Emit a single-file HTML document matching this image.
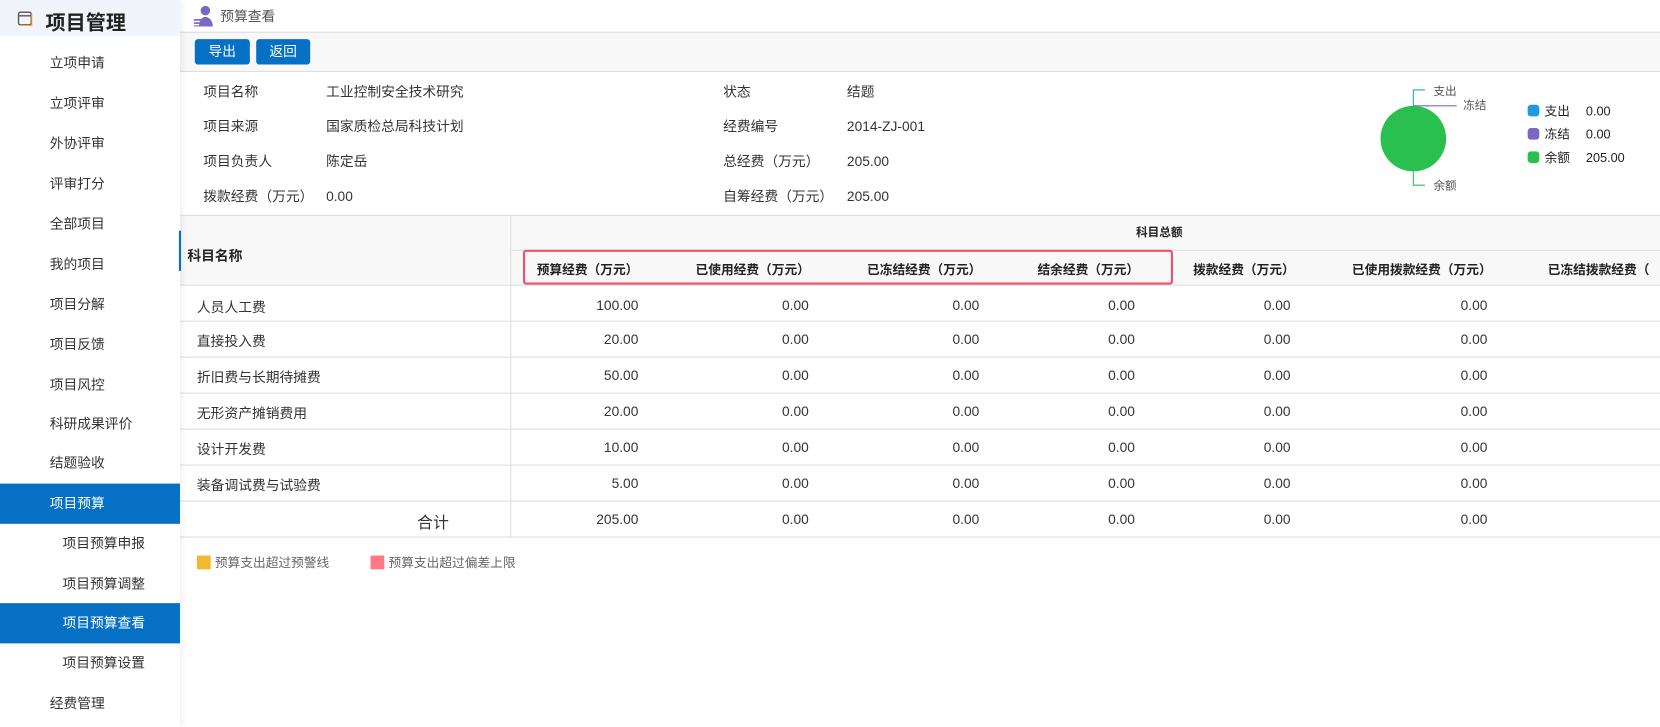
<!DOCTYPE html>
<html><head><meta charset="utf-8"><style>
html,body{margin:0;padding:0;width:1660px;height:727px;overflow:hidden;background:#fff}
#r{position:absolute;left:0;top:0;width:1568px;height:687px;transform:scale(1.05867,1.0582);transform-origin:0 0;font-family:"Liberation Sans","Noto Sans CJK SC",sans-serif;font-size:13px;color:#333}
.a{position:absolute;white-space:nowrap}
.n{margin-top:2px}
.c{margin-top:-1px}
#sb{position:absolute;left:0;top:0;width:170px;height:687px;background:#fff;box-shadow:2px 0 6px rgba(0,0,0,.08);z-index:2}
.it{position:absolute;left:0;width:170px;height:38px;line-height:38px;font-size:13px;color:#333}
.it.on{background:#0670c4;color:#fff}
.hd{position:absolute;font-weight:bold;font-size:12px;color:#222;text-align:center;white-space:nowrap}
.v{position:absolute;text-align:right;white-space:nowrap;font-size:13px;color:#333;margin-top:2px}
.hl{position:absolute;left:170px;width:1398px;height:1px;background:#ddd}
</style></head><body><div id="r">
<div id="sb">
 <div class="a" style="left:0;top:0;width:170px;height:34px;background:#f2f4fc"></div>
 <svg class="a" style="left:16px;top:10px" width="16" height="15" viewBox="0 0 16 15"><rect x="1.5" y="1.5" width="12" height="12" rx="2" fill="none" stroke="#555" stroke-width="1.3"/><path d="M2 5h11" stroke="#555" stroke-width="1.3"/><path d="M3 14h11V3" stroke="#f0a030" stroke-width="1" fill="none"/></svg>
 <div class="a" style="left:43px;top:7px;font-size:19px;font-weight:bold;color:#222">项目管理</div>
 <div class="it" style="top:41px"><span style="padding-left:47px">立项申请</span></div>
 <div class="it" style="top:79px"><span style="padding-left:47px">立项评审</span></div>
 <div class="it" style="top:117px"><span style="padding-left:47px">外协评审</span></div>
 <div class="it" style="top:155px"><span style="padding-left:47px">评审打分</span></div>
 <div class="it" style="top:193px"><span style="padding-left:47px">全部项目</span></div>
 <div class="it" style="top:231px"><span style="padding-left:47px">我的项目</span></div>
 <div class="it" style="top:269px"><span style="padding-left:47px">项目分解</span></div>
 <div class="it" style="top:307px"><span style="padding-left:47px">项目反馈</span></div>
 <div class="it" style="top:345px"><span style="padding-left:47px">项目风控</span></div>
 <div class="it" style="top:382px"><span style="padding-left:47px">科研成果评价</span></div>
 <div class="it" style="top:419px"><span style="padding-left:47px">结题验收</span></div>
 <div class="it on" style="top:457px"><span style="padding-left:47px">项目预算</span></div>
 <div class="it" style="top:495px"><span style="padding-left:59px">项目预算申报</span></div>
 <div class="it" style="top:533px"><span style="padding-left:59px">项目预算调整</span></div>
 <div class="it on" style="top:570px"><span style="padding-left:59px">项目预算查看</span></div>
 <div class="it" style="top:608px"><span style="padding-left:59px">项目预算设置</span></div>
 <div class="it" style="top:646px"><span style="padding-left:47px">经费管理</span></div>
</div>
<div class="a" style="left:169px;top:218px;width:2px;height:38px;background:#0670c4;z-index:3"></div>
<svg class="a" style="left:183px;top:4px" width="22" height="21" viewBox="0 0 22 21"><circle cx="11" cy="6" r="4.5" fill="#7b68c4"/><path d="M5 21c0-6 3-9 6-9s7 3 7 9z" fill="#7b68c4"/><rect x="0" y="14" width="7" height="1.6" fill="#7b68c4"/><rect x="0" y="17" width="7" height="1.6" fill="#7b68c4"/><rect x="0" y="20" width="7" height="1" fill="#7b68c4"/></svg>
<div class="a" style="left:208px;top:5px;color:#555">预算查看</div>
<div class="hl" style="top:30px;background:#d8d8d8"></div>
<div class="a" style="left:170px;top:31px;width:1398px;height:36px;background:#f8f8f8"></div>
<div class="a" style="left:184px;top:37px;width:52px;height:24px;background:#0670c4;border-radius:3px;color:#fff;text-align:center;line-height:24px">导出</div>
<div class="a" style="left:242px;top:37px;width:51px;height:24px;background:#0670c4;border-radius:3px;color:#fff;text-align:center;line-height:24px">返回</div>
<div class="hl" style="top:67px"></div>
<div class="a c" style="left:192px;top:77px">项目名称</div><div class="a c" style="left:308px;top:77px">工业控制安全技术研究</div>
<div class="a c" style="left:192px;top:110px">项目来源</div><div class="a c" style="left:308px;top:110px">国家质检总局科技计划</div>
<div class="a c" style="left:192px;top:143px">项目负责人</div><div class="a c" style="left:308px;top:143px">陈定岳</div>
<div class="a c" style="left:192px;top:176px">拨款经费（万元）</div><div class="a n" style="left:308px;top:176px">0.00</div>
<div class="a c" style="left:683px;top:77px">状态</div><div class="a c" style="left:800px;top:77px">结题</div>
<div class="a c" style="left:683px;top:110px">经费编号</div><div class="a n" style="left:800px;top:110px">2014-ZJ-001</div>
<div class="a c" style="left:683px;top:143px">总经费（万元）</div><div class="a n" style="left:800px;top:143px">205.00</div>
<div class="a c" style="left:683px;top:176px">自筹经费（万元）</div><div class="a n" style="left:800px;top:176px">205.00</div>
<svg class="a" style="left:1290px;top:72px" width="120" height="115" viewBox="0 0 120 115">
<circle cx="45" cy="59" r="31" fill="#29c04f"/>
<path d="M45 28V13h11" stroke="#1ea0e0" fill="none"/>
<path d="M45 28h41" stroke="#7b68c4" fill="none"/>
<path d="M45 90v13h11" stroke="#29c04f" fill="none"/>
<text x="64" y="18" font-size="11" fill="#555" font-family="Noto Sans CJK SC">支出</text>
<text x="92" y="31" font-size="11" fill="#555" font-family="Noto Sans CJK SC">冻结</text>
<text x="64" y="107" font-size="11" fill="#555" font-family="Noto Sans CJK SC">余额</text>
</svg>
<div class="a" style="left:1443px;top:99px;width:11px;height:11px;border-radius:3px;background:#1e9ae0"></div>
<div class="a" style="left:1443px;top:121px;width:11px;height:11px;border-radius:3px;background:#7b68c4"></div>
<div class="a" style="left:1443px;top:143px;width:11px;height:11px;border-radius:3px;background:#29c04f"></div>
<div class="a" style="left:1459px;top:96px;font-size:12px;color:#222">支出</div><div class="a" style="left:1498px;top:98px;font-size:12px;color:#222">0.00</div>
<div class="a" style="left:1459px;top:118px;font-size:12px;color:#222">冻结</div><div class="a" style="left:1498px;top:120px;font-size:12px;color:#222">0.00</div>
<div class="a" style="left:1459px;top:140px;font-size:12px;color:#222">余额</div><div class="a" style="left:1498px;top:142px;font-size:12px;color:#222">205.00</div>
<div class="a" style="left:170px;top:203px;width:1398px;height:66px;background:#f8f8f8"></div>
<div class="hl" style="top:203px"></div>
<div class="a" style="left:482px;top:236px;width:1086px;height:1px;background:#e0e0e0"></div>
<div class="hl" style="top:269px"></div>
<div class="hl" style="top:303px"></div>
<div class="hl" style="top:337px"></div>
<div class="hl" style="top:371px"></div>
<div class="hl" style="top:405px"></div>
<div class="hl" style="top:439px"></div>
<div class="hl" style="top:473px"></div>
<div class="hl" style="top:507px"></div>
<div class="a" style="left:482px;top:203px;width:1px;height:304px;background:#e0e0e0"></div>
<div class="hd" style="left:177px;top:231px;text-align:left;font-size:13px">科目名称</div>
<div class="hd" style="left:980px;top:211px;width:230px;font-size:11px">科目总额</div>
<div class="hd" style="left:480px;top:246px;width:150px">预算经费（万元）</div>
<div class="hd" style="left:636px;top:246px;width:150px">已使用经费（万元）</div>
<div class="hd" style="left:798px;top:246px;width:150px">已冻结经费（万元）</div>
<div class="hd" style="left:953px;top:246px;width:150px">结余经费（万元）</div>
<div class="hd" style="left:1100px;top:246px;width:150px">拨款经费（万元）</div>
<div class="hd" style="left:1258px;top:246px;width:170px">已使用拨款经费（万元）</div>
<div class="hd" style="left:1462px;top:246px;text-align:left">已冻结拨款经费（</div>
<div class="a" style="left:494px;top:236px;width:610px;height:29px;border:2px solid #f0506e;border-radius:3px"></div>
<div class="a" style="left:186px;top:280px">人员人工费</div>
<div class="a" style="left:186px;top:312px">直接投入费</div>
<div class="a" style="left:186px;top:346px">折旧费与长期待摊费</div>
<div class="a" style="left:186px;top:380px">无形资产摊销费用</div>
<div class="a" style="left:186px;top:414px">设计开发费</div>
<div class="a" style="left:186px;top:448px">装备调试费与试验费</div>
<div class="a" style="left:394px;top:483px;font-size:15px">合计</div>
<div id="vals"></div>
<div class="a" style="left:186px;top:525px;width:13px;height:13px;background:#f5b731"></div>
<div class="a" style="left:203px;top:523px;color:#666;font-size:12px">预算支出超过预警线</div>
<div class="a" style="left:350px;top:525px;width:13px;height:13px;background:#fd7a85"></div>
<div class="a" style="left:367px;top:523px;color:#666;font-size:12px">预算支出超过偏差上限</div>
<script>
var rows=[279,311,345,379,413,447,481],b=["100.00","20.00","50.00","20.00","10.00","5.00","205.00"],xs=[603,764,925,1072,1219,1405],h="";
rows.forEach(function(t,i){xs.forEach(function(x,j){h+='<div class="v" style="left:'+(x-100)+'px;width:100px;top:'+t+'px">'+(j==0?b[i]:"0.00")+'</div>';});});
document.getElementById("vals").innerHTML=h;
</script>
</div></body></html>
